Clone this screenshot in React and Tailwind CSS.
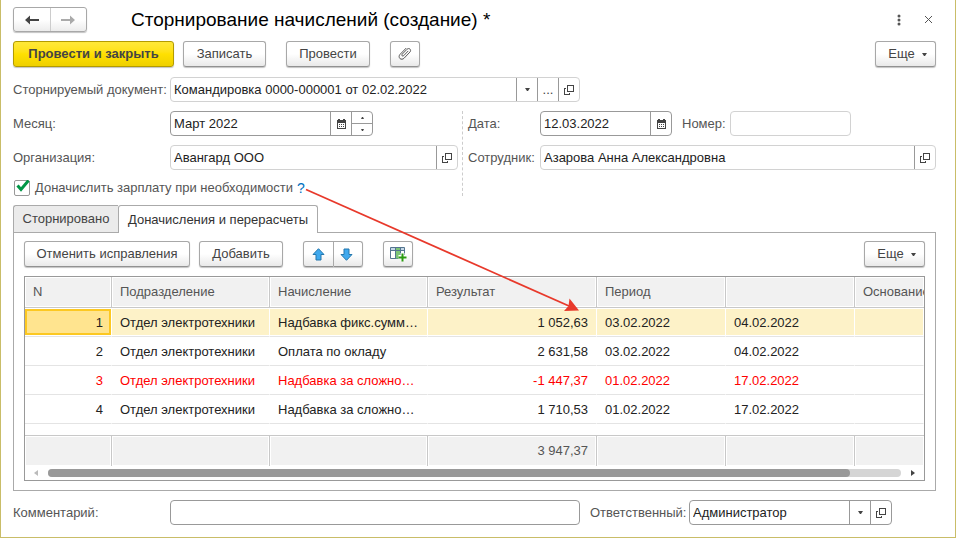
import React, { useState } from 'react';

const rows = [
  { n: 1, dept: 'Отдел электротехники', charge: 'Надбавка фикс.сумм…', result: '1 052,63', from: '03.02.2022', to: '04.02.2022' },
  { n: 2, dept: 'Отдел электротехники', charge: 'Оплата по окладу', result: '2 631,58', from: '03.02.2022', to: '04.02.2022' },
  { n: 3, dept: 'Отдел электротехники', charge: 'Надбавка за сложно…', result: '-1 447,37', from: '01.02.2022', to: '17.02.2022', storno: true },
  { n: 4, dept: 'Отдел электротехники', charge: 'Надбавка за сложно…', result: '1 710,53', from: '01.02.2022', to: '17.02.2022' },
];

const headers = ['N', 'Подразделение', 'Начисление', 'Результат', 'Период', '', 'Основание'];

const CaretDown = () => (
  <svg width="5" height="3" viewBox="0 0 5 3" className="shrink-0">
    <path d="M0 0h5L3 3H2z" fill="#444" />
  </svg>
);

const OpenIcon = () => (
  <svg width="10" height="10" viewBox="0 0 10 10" fill="none" stroke="#444" shapeRendering="crispEdges">
    <path d="M3.5 0.5h6v6h-6z" />
    <path d="M2 3.5H0.5v6h5V8" />
  </svg>
);

const CalendarIcon = () => (
  <svg width="9" height="10" viewBox="0 0 9 10" shapeRendering="crispEdges">
    <path d="M0 1h9v9H0z" fill="#444" />
    <path d="M1 0h2v2H1zM6 0h2v2H6z" fill="#444" />
    <path d="M1 4h7v5H1z" fill="#fff" />
    <path d="M2 5h1v1H2zM4 5h1v1H4zM6 5h1v1H6zM2 7h1v1H2zM4 7h1v1H4zM6 7h1v1H6z" fill="#444" />
  </svg>
);

const NavArrow = ({ back }) => (
  <svg width="14" height="10" viewBox="0 0 14 10">
    {back ? (
      <path d="M14 4v2H5v3.5L0 5l5-4.5V4z" fill="#444" />
    ) : (
      <path d="M0 4v2h9v3.5L14 5 9 0.5V4z" fill="#aaa" />
    )}
  </svg>
);

const ClipIcon = () => (
  <svg width="14" height="14" viewBox="0 0 14 14" fill="none" stroke="#555" strokeWidth="1" strokeLinecap="round">
    <path d="M10 4.200 5.700 8.700c-.5.5-1.200.5-1.600.1-.4-.4-.4-1 .1-1.600L9 2.300c.9-.9 2.200-1 3-.2.8.8.8 2-.1 3L6.100 11.200c-1.200 1.200-3 1.400-4.200.3-1.100-1.200-1-3 .2-4.200L8 1.300" />
  </svg>
);

const MoveIcon = ({ down }) => (
  <svg width="13" height="13" viewBox="0 0 13 13" className={down ? 'rotate-180' : ''}>
    <path d="M6.500 0.700 12 6.500H9v5.500H4V6.500H1z" fill="#3fa9ee" stroke="#2477ad" strokeLinejoin="round" />
  </svg>
);

const AddColumnIcon = () => (
  <svg width="17" height="15" viewBox="0 0 17 15">
    <path d="M0.500 0.500h14v11H0.500z" fill="#fff" stroke="#54758f" />
    <path d="M1 1h13v2H1z" fill="#c4d7e6" />
    <path d="M5 1h5v10.500H5z" fill="#7cc576" />
    <path d="M0 3.500h15M5.500 0v12M10.500 0v12" stroke="#54758f" />
    <path d="M12.500 6v8M8.500 10h8" stroke="#fff" strokeWidth="4" />
    <path d="M12.500 6.500v8M8.500 10.500h8" stroke="#2d9b12" strokeWidth="2" />
  </svg>
);

const buttonBase =
  'flex h-[26px] items-center justify-center rounded-[3px] border border-[#a8a8a8] border-b-[#919191] bg-linear-to-b from-white from-50% to-[#e9e9e9] text-[#444] shadow-[0_1px_1px_#c4c4c4]';

const Button = ({ className = '', children, ...props }) => (
  <button type="button" className={`${buttonBase} ${className}`} {...props}>
    {children}
  </button>
);

const MoreButton = () => (
  <Button className="ml-auto w-[61px] gap-[7px] pl-1">
    <span>Еще</span>
    <CaretDown />
  </Button>
);

// Text box with optional picker buttons on its right side
const Field = ({ id, value = '', strong, className = '', children }) => (
  <div
    className={`flex h-[25px] overflow-hidden rounded-[4px] border bg-white ${
      strong ? 'border-[#999]' : 'border-[#d2d2d2]'
    } ${className}`}
  >
    <input id={id} type="text" defaultValue={value} className="min-w-0 flex-1 px-[3px] text-[#222] outline-none" />
    {children}
  </div>
);

const FieldButton = ({ label, children }) => (
  <button
    type="button"
    aria-label={label}
    className="flex w-[21px] shrink-0 items-center justify-center border-l border-[#999] text-[#444]"
  >
    {children}
  </button>
);

const Stepper = () => (
  <div className="flex w-[21px] shrink-0 flex-col border-l border-[#999]">
    <button type="button" aria-label="Следующий" className="flex flex-1 items-center justify-center border-b border-[#999]">
      <svg width="3" height="2" viewBox="0 0 3 2"><path d="M1 0h1l1 2H0z" fill="#444" /></svg>
    </button>
    <button type="button" aria-label="Предыдущий" className="flex flex-1 items-center justify-center">
      <svg width="3" height="2" viewBox="0 0 3 2"><path d="M0 0h3L2 2H1z" fill="#444" /></svg>
    </button>
  </div>
);

const Label = ({ htmlFor, className = '', children }) => (
  <label htmlFor={htmlFor} className={`shrink-0 whitespace-nowrap text-[#555] ${className}`}>
    {children}
  </label>
);

const ChargesTable = () => {
  const [selected, setSelected] = useState(1);

  return (
    <div className="mt-[9px] overflow-hidden border border-[#999]">
      <table className="w-full table-fixed border-separate border-spacing-0">
        <colgroup>
          <col className="w-[87px]" />
          <col className="w-[158px]" />
          <col className="w-[158px]" />
          <col className="w-[169px]" />
          <col className="w-[129px]" />
          <col className="w-[129px]" />
          <col />
        </colgroup>
        <thead>
          <tr className="h-[31px]">
            {headers.map((header, index) => (
              <th
                key={index}
                className="overflow-hidden border-r border-b border-[#c8c8c8] bg-[#f1f1f1] pl-2 text-left font-normal whitespace-nowrap text-[#555] shadow-[inset_0_0_0_1px_#fff] last:border-r-0"
              >
                {header}
              </th>
            ))}
          </tr>
        </thead>
        <tbody>
          {rows.map((row) => {
            const active = row.n === selected;
            const cell = `border-r border-b border-r-white border-b-[#e4e4e4] px-2 pt-[2px] whitespace-nowrap ${
              active ? 'bg-[#fdf2c8] shadow-[inset_0_1px_0_#fff,inset_0_-1px_0_#fff]' : ''
            }`;
            return (
              <tr
                key={row.n}
                onClick={() => setSelected(row.n)}
                className={`h-[29px] ${row.storno ? 'text-[#ff0000]' : 'text-[#222]'}`}
              >
                <td className={`${cell} text-right`}>
                  <div className="relative">
                    {active && (
                      <span className="absolute -inset-x-2 -top-1 -bottom-[2px] border-2 border-[#fcc822] bg-[#ffe48f]" />
                    )}
                    <span className="relative">{row.n}</span>
                  </div>
                </td>
                <td className={cell}>{row.dept}</td>
                <td className={cell}>{row.charge}</td>
                <td className={`${cell} text-right`}>{row.result}</td>
                <td className={cell}>{row.from}</td>
                <td className={cell}>{row.to}</td>
                <td className={cell} />
              </tr>
            );
          })}
        </tbody>
        <tfoot>
          <tr className="h-[11px]">
            <td colSpan={7} />
          </tr>
          <tr className="h-[31px]">
            {headers.map((header, index) => (
              <td
                key={index}
                className="border-t border-r border-[#c8c8c8] bg-[#f1f1f1] px-2 text-right text-[#555] shadow-[inset_0_0_0_1px_#fff] last:border-r-0"
              >
                {index === 3 ? '3 947,37' : ''}
              </td>
            ))}
          </tr>
        </tfoot>
      </table>
      <div className="flex h-[14px] items-center pr-[9px] pb-px pl-[9px]">
        <svg width="4" height="6" viewBox="0 0 4 6"><path d="M4 0v6L0 3z" fill="#bbb" /></svg>
        <div className="mx-[10px] h-2 flex-1 rounded-full bg-[#d5d5d5]">
          <div className="h-2 w-[94%] rounded-full bg-[#999]" />
        </div>
        <svg width="4" height="6" viewBox="0 0 4 6"><path d="M0 0v6l4-3z" fill="#444" /></svg>
      </div>
    </div>
  );
};

const App = () => {
  const [recalc, setRecalc] = useState(true);

  return (
    <main className="relative min-h-screen border-x border-b border-[#c9bd68] bg-white pt-[7px] pr-[19px] pb-3 pl-3 font-['Liberation_Sans',Arial,sans-serif] text-[13px] leading-5">
      <header className="flex h-[25px] items-center">
        <div className="flex h-[25px] w-[74px] rounded-[3px] border border-[#a8a8a8] bg-linear-to-b from-white from-50% to-[#ececec] shadow-[0_1px_1px_#c4c4c4]">
          <button type="button" aria-label="Назад" className="flex flex-1 items-center justify-center border-r border-[#ccc]">
            <NavArrow back />
          </button>
          <button type="button" aria-label="Вперед" className="flex flex-1 items-center justify-center">
            <NavArrow />
          </button>
        </div>
        <h1 className="ml-11 text-[19px] text-black">Сторнирование начислений (создание) *</h1>
        <div className="ml-auto flex items-center gap-6 pr-1">
          <button type="button" aria-label="Меню">
            <svg width="4" height="12" viewBox="0 0 4 12" fill="#555">
              <circle cx="2" cy="2" r="1.500" />
              <circle cx="2" cy="6" r="1.500" />
              <circle cx="2" cy="10" r="1.500" />
            </svg>
          </button>
          <button type="button" aria-label="Закрыть">
            <svg width="7" height="7" viewBox="0 0 7 7" stroke="#555"><path d="M0 0l7 7M7 0L0 7" /></svg>
          </button>
        </div>
      </header>

      <div className="mt-[9px] flex">
        <button
          type="button"
          className="h-[26px] w-[161px] rounded-[3px] border border-[#b39b00] bg-linear-to-b from-[#ffe838] via-[#ffe000] to-[#efd000] font-bold text-[#444] shadow-[0_1px_1px_#c4c4c4]"
        >
          Провести и закрыть
        </button>
        <Button className="ml-[9px] w-[83px]">Записать</Button>
        <Button className="ml-5 w-[84px]">Провести</Button>
        <Button className="ml-5 w-[30px]" aria-label="Присоединенные файлы">
          <ClipIcon />
        </Button>
        <MoreButton />
      </div>

      <div className="mt-[10px] flex items-center">
        <Label htmlFor="document" className="w-[157px]">Сторнируемый документ:</Label>
        <Field id="document" value="Командировка 0000-000001 от 02.02.2022" className="w-[410px]">
          <FieldButton label="Выбрать из списка"><CaretDown /></FieldButton>
          <FieldButton label="Выбрать">...</FieldButton>
          <FieldButton label="Открыть"><OpenIcon /></FieldButton>
        </Field>
      </div>

      <div className="mt-[9px] flex">
        <div className="flex w-[445px] shrink-0 flex-col gap-[9px]">
          <div className="flex items-center">
            <Label htmlFor="month" className="w-[157px]">Месяц:</Label>
            <Field id="month" value="Март 2022" strong className="w-[203px]">
              <FieldButton label="Календарь"><CalendarIcon /></FieldButton>
              <Stepper />
            </Field>
          </div>
          <div className="flex items-center">
            <Label htmlFor="company" className="w-[157px]">Организация:</Label>
            <Field id="company" value="Авангард ООО" className="flex-1">
              <FieldButton label="Открыть"><OpenIcon /></FieldButton>
            </Field>
          </div>
          <div className="flex h-[17px] items-center">
            <label className="flex items-center gap-[5px] text-[#555]">
              <span className="relative ml-px size-4">
                <input
                  type="checkbox"
                  checked={recalc}
                  onChange={(e) => setRecalc(e.target.checked)}
                  className="block size-4 appearance-none rounded-[2px] border border-[#999] bg-white"
                />
                {recalc && (
                  <svg width="14" height="12" viewBox="0 0 14 12" className="pointer-events-none absolute top-0 left-[2px]">
                    <path d="M1.500 5.500 5 9.500 12.500 0.500" fill="none" stroke="#009646" strokeWidth="3" />
                  </svg>
                )}
              </span>
              Доначислить зарплату при необходимости
            </label>
            <a href="#help" className="ml-1 text-sm text-[#0070c0]">?</a>
          </div>
        </div>
        <div className="ml-1 border-l border-dashed border-[#ccc]" />
        <div className="ml-[5px] flex flex-1 flex-col gap-[9px]">
          <div className="flex items-center">
            <Label htmlFor="date" className="w-[72px]">Дата:</Label>
            <Field id="date" value="12.03.2022" strong className="w-[132px]">
              <FieldButton label="Календарь"><CalendarIcon /></FieldButton>
            </Field>
            <Label htmlFor="number" className="ml-[10px] w-12">Номер:</Label>
            <Field id="number" className="w-[121px]" />
          </div>
          <div className="flex items-center">
            <Label htmlFor="employee" className="w-[72px]">Сотрудник:</Label>
            <Field id="employee" value="Азарова Анна Александровна" className="flex-1">
              <FieldButton label="Открыть"><OpenIcon /></FieldButton>
            </Field>
          </div>
        </div>
      </div>

      <section className="mt-[9px]">
        <div role="tablist" className="flex h-7">
          <button
            type="button"
            role="tab"
            aria-selected="false"
            className="w-[105px] rounded-tl-[3px] border border-r-0 border-[#aaa] bg-[#ebebeb] text-[#444]"
          >
            Сторнировано
          </button>
          <button
            type="button"
            role="tab"
            aria-selected="true"
            className="w-[200px] rounded-t-[3px] border border-b-0 border-[#aaa] bg-white text-[#333]"
          >
            Доначисления и перерасчеты
          </button>
          <div className="flex-1 border-b border-[#aaa]" />
        </div>
        <div role="tabpanel" className="border border-t-0 border-[#aaa] px-[10px] pt-2 pb-[9px]">
          <div className="flex">
            <Button className="w-[166px]">Отменить исправления</Button>
            <Button className="ml-[9px] w-[84px]">Добавить</Button>
            <Button className="ml-5 w-[31px] rounded-r-none" aria-label="Вверх">
              <MoveIcon />
            </Button>
            <Button className="w-[29px] rounded-l-none border-l-0 pr-[3px]" aria-label="Вниз">
              <MoveIcon down />
            </Button>
            <Button className="ml-5 w-[30px]" aria-label="Добавить колонку">
              <AddColumnIcon />
            </Button>
            <MoreButton />
          </div>
          <ChargesTable />
        </div>
      </section>

      <footer className="mt-[9px] flex items-center">
        <Label htmlFor="comment" className="w-[157px]">Комментарий:</Label>
        <Field id="comment" strong className="w-[410px]" />
        <Label htmlFor="responsible" className="ml-[10px] w-[99px]">Ответственный:</Label>
        <Field id="responsible" value="Администратор" strong className="w-[203px]">
          <FieldButton label="Выбрать из списка"><CaretDown /></FieldButton>
          <FieldButton label="Открыть"><OpenIcon /></FieldButton>
        </Field>
      </footer>

      {/* pointer from the help mark to the result column */}
      <svg width="276" height="124" viewBox="0 0 276 124" className="pointer-events-none absolute top-[188px] left-[304px] z-20">
        <path d="M1 1.500 264 118" stroke="#e8392b" strokeWidth="1.800" />
        <path d="M274 122.500 259 123 263.500 118 264.500 110.500z" fill="#e8392b" />
      </svg>
    </main>
  );
};

export default App;
